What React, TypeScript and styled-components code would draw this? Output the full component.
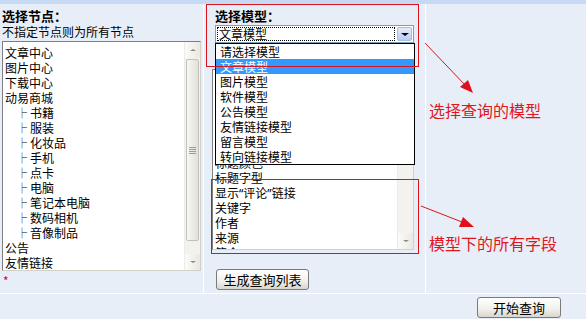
import styled, { createGlobalStyle } from "styled-components";

const GlobalStyle = createGlobalStyle`
  html, body {
    margin: 0;
    padding: 0;
    background: #e8eef7;
  }
  * {
    box-sizing: border-box;
  }
`;

const NODES: { name: string; child?: boolean }[] = [
  { name: "文章中心" },
  { name: "图片中心" },
  { name: "下载中心" },
  { name: "动易商城" },
  { name: "书籍", child: true },
  { name: "服装", child: true },
  { name: "化妆品", child: true },
  { name: "手机", child: true },
  { name: "点卡", child: true },
  { name: "电脑", child: true },
  { name: "笔记本电脑", child: true },
  { name: "数码相机", child: true },
  { name: "音像制品", child: true },
  { name: "公告" },
  { name: "友情链接" },
];

const MODELS = ["请选择模型", "文章模型", "图片模型", "软件模型", "公告模型", "友情链接模型", "留言模型", "转向链接模型"];

const FIELDS = ["标题", "副标题", "简短标题", "标题颜色", "标题字型", "显示\u201c评论\u201d链接", "关键字", "作者", "来源", "简介"];

const Page = styled.div`
  position: relative;
  width: 586px;
  height: 319px;
  overflow: hidden;
  background: #e8eef7;
  font-family: "Noto Sans CJK SC", "Noto Sans", sans-serif;
  font-size: 12px;
  color: #000;
`;

const TopBand = styled.div`
  height: 4px;
  background: #c6dbf3;
`;

const Main = styled.div`
  display: flex;
  height: 290px;
  border-bottom: 1px solid #ffffff;
`;

const Column = styled.div<{ $width?: number; $pad: string }>`
  ${(p) => (p.$width ? `width: ${p.$width}px;` : "flex: 1;")}
  padding: ${(p) => p.$pad};
  border-right: ${(p) => (p.$width ? "1px solid #ffffff" : "none")};
  display: flex;
  flex-direction: column;
`;

const Heading = styled.div`
  font-weight: bold;
  font-size: 13px;
  line-height: 16px;
  height: 16px;
`;

const Hint = styled.div`
  line-height: 15px;
  height: 15px;
`;

const ListBox = styled.div<{ $width: number; $height: number; $top: number; $left?: number }>`
  position: relative;
  width: ${(p) => p.$width}px;
  height: ${(p) => p.$height}px;
  margin-top: ${(p) => p.$top}px;
  margin-left: ${(p) => p.$left ?? 0}px;
  background: #ffffff;
  border: 1px solid #7f7f7f;
  border-right-color: #d4d0c8;
  border-bottom-color: #d4d0c8;
  display: flex;
  overflow: hidden;
`;

const Items = styled.div<{ $pad: number }>`
  flex: 1;
  padding-top: ${(p) => p.$pad}px;
  padding-left: 2px;
`;

const Item = styled.div<{ $child?: boolean }>`
  line-height: 15px;
  height: 15px;
  white-space: nowrap;
  padding-left: ${(p) => (p.$child ? 12 : 0)}px;
`;

const Latin = styled.span`
  font-family: "Noto Sans", sans-serif;
`;

const Branch = styled.span`
  display: inline-block;
  width: 13px;
  font-size: 10px;
  vertical-align: top;
`;

const Scrollbar = styled.div`
  width: 16px;
  display: flex;
  flex-direction: column;
  background: #f3f2ee;
  border-left: 1px solid #eeede5;
`;

const ScrollButton = styled.div`
  height: 16px;
  display: flex;
  align-items: center;
  justify-content: center;
  background: linear-gradient(to right, #fbfbfa, #e9e8e2);
`;

const Tri = styled.span<{ $up?: boolean; $size?: number; $color?: string }>`
  width: 0;
  height: 0;
  border-left: ${(p) => p.$size ?? 3}px solid transparent;
  border-right: ${(p) => p.$size ?? 3}px solid transparent;
  ${(p) =>
    p.$up
      ? `border-bottom: ${(p.$size ?? 3) - 1}px solid ${p.$color ?? "#888"};`
      : `border-top: ${(p.$size ?? 3) - 1}px solid ${p.$color ?? "#888"};`}
`;

const Thumb = styled.div<{ $top: number; $height: number }>`
  margin-top: ${(p) => p.$top}px;
  height: ${(p) => p.$height}px;
  margin-left: 1px;
  margin-right: 1px;
  border: 1px solid #c2c1bb;
  border-radius: 2px;
  background: linear-gradient(to right, #f7f7f5, #e1e0da);
  display: flex;
  flex-direction: column;
  align-items: center;
  justify-content: center;
  gap: 1px;
`;

const Grip = styled.span`
  width: 7px;
  height: 1px;
  background: #9c9b96;
`;

const Track = styled.div`
  flex: 1;
`;

const Star = styled.div`
  color: #e0001b;
  line-height: 12px;
  margin-top: 4px;
  padding-left: 1px;
`;

const ModelBlock = styled.div`
  padding-left: 9px;
  display: flex;
  flex-direction: column;
`;

const Select = styled.div`
  margin-top: 1px;
  width: 199px;
  height: 18px;
  border: 1px solid #7f9db9;
  background: #ffffff;
  display: flex;
  align-items: stretch;
  padding: 1px;
`;

const SelectValue = styled.div`
  flex: 1;
  border: 1px dotted #000;
  line-height: 12px;
  padding-left: 1px;
  margin-right: 2px;
`;

const SelectArrow = styled.div`
  width: 15px;
  border: 1px solid #a9bcd9;
  border-radius: 2px;
  background: linear-gradient(to bottom, #e4ecfb, #b8cdf5);
  display: flex;
  align-items: center;
  justify-content: center;
`;

const Dropdown = styled.div`
  position: absolute;
  left: 215px;
  top: 43px;
  width: 200px;
  border: 1px solid #000;
  background: #ffffff;
  z-index: 2;
`;

const Option = styled.div<{ $active?: boolean }>`
  height: 15px;
  line-height: 15px;
  padding-left: 4px;
  background: ${(p) => (p.$active ? "#3399ff" : "transparent")};
  color: ${(p) => (p.$active ? "#ffffff" : "#000")};
`;

const Button = styled.button<{ $width: number }>`
  width: ${(p) => p.$width}px;
  height: 21px;
  padding: 0;
  font-family: inherit;
  font-size: 13px;
  line-height: 17px;
  color: #000;
  border: 1px solid #7a7a7a;
  border-radius: 3px;
  background: linear-gradient(to bottom, #ffffff 0%, #f0f0ea 60%, #d8d6cc 100%);
`;

const ButtonRow = styled.div<{ $justify: string; $top: number; $pad: string }>`
  display: flex;
  justify-content: ${(p) => p.$justify};
  margin-top: ${(p) => p.$top}px;
  padding: ${(p) => p.$pad};
`;

const Note = styled.div<{ $top: number }>`
  margin-top: ${(p) => p.$top}px;
  font-size: 16px;
  line-height: 20px;
  color: #e0161d;
  white-space: nowrap;
`;

const Mark = styled.div<{ $x: number; $y: number; $w: number; $h: number }>`
  position: absolute;
  left: ${(p) => p.$x}px;
  top: ${(p) => p.$y}px;
  width: ${(p) => p.$w}px;
  height: ${(p) => p.$h}px;
  border: 1px solid #d9141c;
  pointer-events: none;
  z-index: 3;
`;

const Arrows = styled.svg`
  position: absolute;
  left: 0;
  top: 0;
  z-index: 3;
  pointer-events: none;
`;

function ScrollBar({ thumbTop, thumbHeight }: { thumbTop: number; thumbHeight: number }) {
  return (
    <Scrollbar>
      <ScrollButton>
        <Tri $up />
      </ScrollButton>
      {thumbHeight > 0 && (
        <Thumb $top={thumbTop} $height={thumbHeight}>
          <Grip />
          <Grip />
          <Grip />
          <Grip />
        </Thumb>
      )}
      <Track />
      <ScrollButton>
        <Tri />
      </ScrollButton>
    </Scrollbar>
  );
}

// quotes in field names use narrow latin glyphs, like the original page
function FieldLabel({ text }: { text: string }) {
  const parts = text.split(/([\u201c\u201d])/);
  return (
    <>
      {parts.map((part, i) =>
        part === "\u201c" || part === "\u201d" ? <Latin key={i}>{part}</Latin> : part
      )}
    </>
  );
}

export default function App() {
  return (
    <Page>
      <GlobalStyle />
      <TopBand />
      <Main>
        <Column $width={204} $pad="4px 0 0 2px">
          <Heading>选择节点：</Heading>
          <Hint>不指定节点则为所有节点</Hint>
          <ListBox $width={199} $height={230} $top={2}>
            <Items $pad={3}>
              {NODES.map((n) => (
                <Item key={n.name} $child={n.child}>
                  {n.child && <Branch>├</Branch>}
                  {n.name}
                </Item>
              ))}
            </Items>
            <ScrollBar thumbTop={1} thumbHeight={182} />
          </ListBox>
          <Star>*</Star>
        </Column>
        <Column $width={222} $pad="4px 0 0 2px">
          <ModelBlock>
            <Heading>选择模型：</Heading>
            <Select>
              <SelectValue>文章模型</SelectValue>
              <SelectArrow>
                <Tri $size={4} $color="#000" />
              </SelectArrow>
            </Select>
          </ModelBlock>
          <ListBox $width={202} $height={181} $top={26} $left={6}>
            <Items $pad={40}>
              {FIELDS.map((f) => (
                <Item key={f}>
                  <FieldLabel text={f} />
                </Item>
              ))}
            </Items>
            <ScrollBar thumbTop={1} thumbHeight={60} />
          </ListBox>
          <ButtonRow $justify="flex-start" $top={19} $pad="0 0 0 10px">
            <Button $width={93}>生成查询列表</Button>
          </ButtonRow>
        </Column>
        <Column $pad="0 0 0 3px">
          <Note $top={96}>选择查询的模型</Note>
          <Note $top={113}>模型下的所有字段</Note>
        </Column>
      </Main>
      <ButtonRow $justify="flex-end" $top={3} $pad="0 25px 0 0">
        <Button $width={84}>开始查询</Button>
      </ButtonRow>

      <Dropdown>
        {MODELS.map((m) => (
          <Option key={m} $active={m === "文章模型"}>
            {m}
          </Option>
        ))}
      </Dropdown>

      <Mark $x={206} $y={4} $w={213} $h={63} />
      <Mark $x={211} $y={179} $w={208} $h={75} />

      <Arrows width={586} height={319} viewBox="0 0 586 319">
        <line x1={425} y1={43} x2={466} y2={86} stroke="#d9141c" strokeWidth={1} />
        <polygon points="473,93 460,87 468,80" fill="#e0101a" />
        <line x1={421} y1={206} x2={462} y2={222} stroke="#d9141c" strokeWidth={1} />
        <polygon points="474,227 459,227 463,217" fill="#e0101a" />
      </Arrows>
    </Page>
  );
}
